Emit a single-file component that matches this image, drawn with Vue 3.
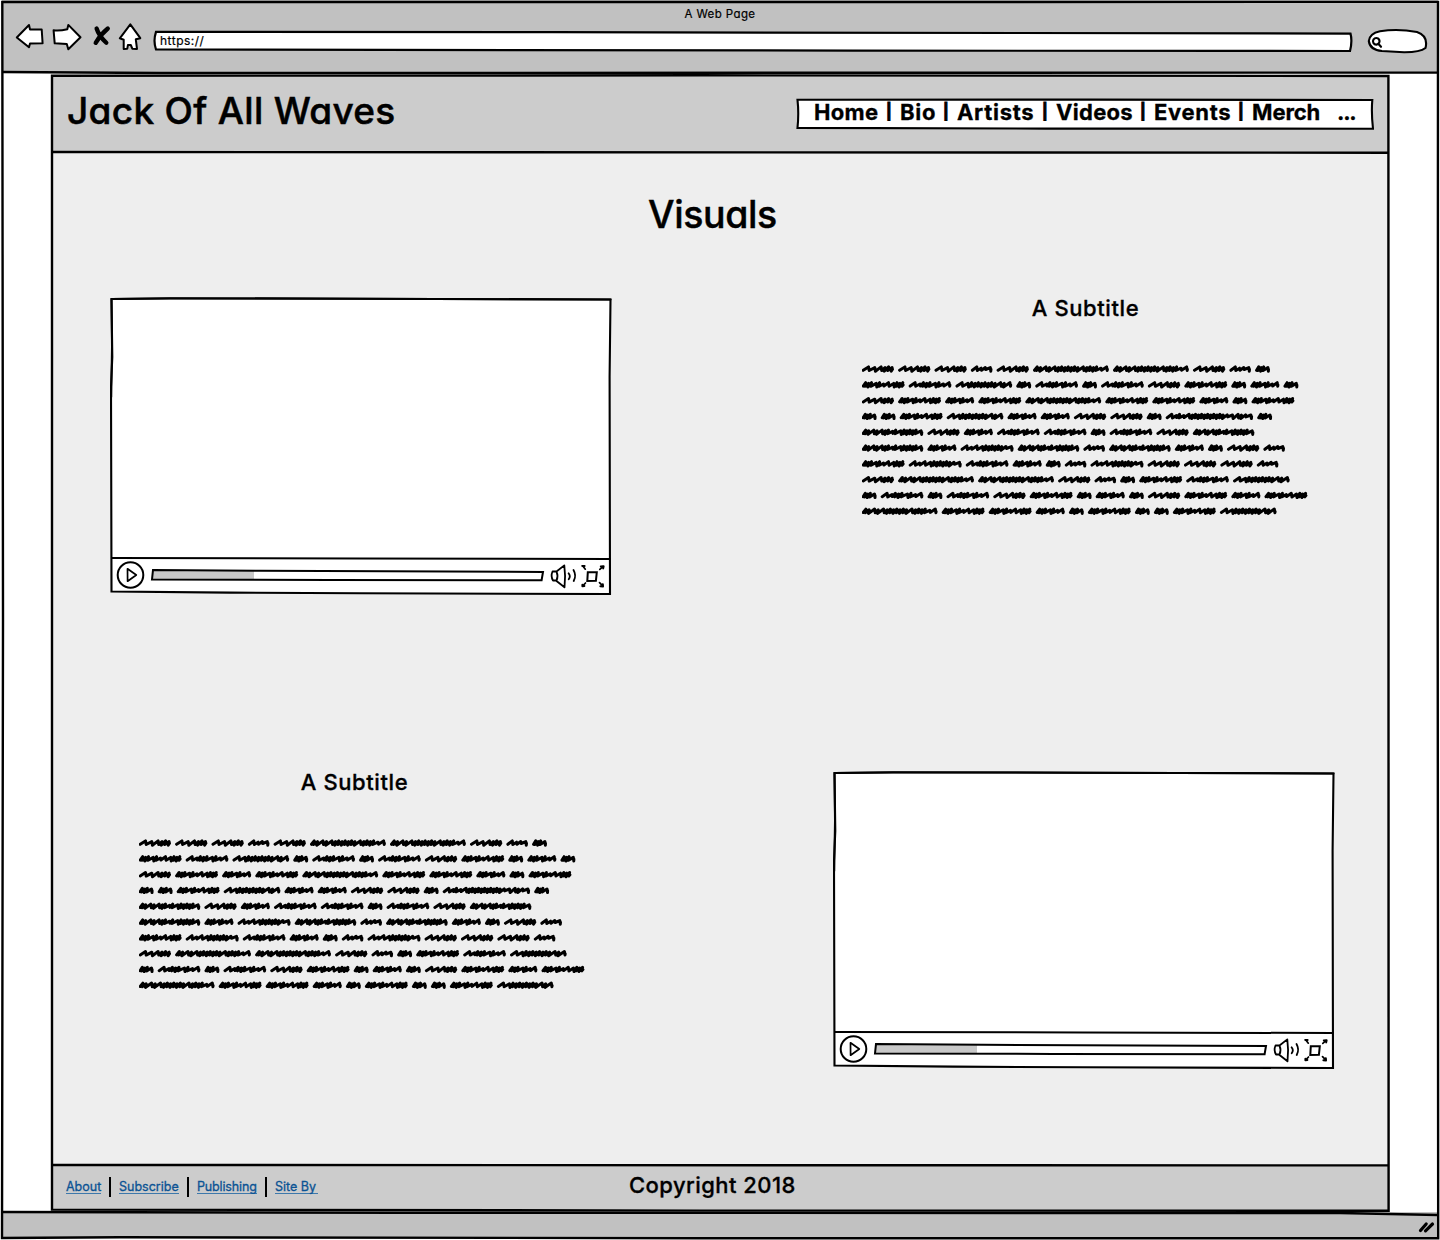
<script setup>
import { h } from 'vue'

const navItems = ['Home', 'Bio', 'Artists', 'Videos', 'Events', 'Merch']
const footerLinks = ['About', 'Subscribe', 'Publishing', 'Site By']

// Scribbled placeholder copy: each letter is one word shape.
const lines = [
  'AAACAHHACB', 'EFGBFBFAEBDB', 'AEDEHEEDBE', 'BBEGDDAABKB', 'IADFFBFAI',
  'IDJICIDBAC', 'EJFDBCJAAAC', 'AHHACBEFG', 'BFBFAEBDBAEDE', 'HEEDBEBBEG'
]

// Stroke steps of a word: s = open slanted stroke, d = tight loop, m = flat hump.
const shapes = {
  A: [36.4, 'sssddd'], B: [19, 'ddds'], C: [25.7, 'smms'], D: [33.2, 'dddsdms'],
  E: [47, 'dddsdmssddd'], F: [46.8, 'smdddsdms'], G: [60.8, 'ssddddddddsds'],
  H: [80, 'ddsdsdddddddsddddms'], I: [65.7, 'ddsdsddmdsddddds'],
  J: [57.1, 'smssddddddms'], K: [91.5, 'smdmsdddddddddddmssdms']
}
const stepWidth = { s: 5, d: 2.8, m: 4 }

function wordPath(code, x0, y) {
  const [advance, steps] = shapes[code]
  const width = advance - 7
  const total = [...steps].reduce((sum, s) => sum + stepWidth[s], 0)
  const k = width / total
  let x = x0 + 1.2
  let d = `M${x.toFixed(1)} ${y + 1.3}`
  let i = 0
  for (const s of steps) {
    const w = stepWidth[s] * k
    const sway = i++ % 2 ? 0.5 : -0.2
    const top = (s === 'm' ? y - 1.3 : y - 1.9) + sway
    const low = (s === 'm' ? y + 0.7 : y + 1.7) + sway
    d += `L${(x + w * 0.85).toFixed(1)} ${top.toFixed(1)}L${(x + w * (s === 'd' ? 0.6 : 0.95)).toFixed(1)} ${low.toFixed(1)}`
    x += w
  }
  return d + `L${(x0 + advance - 5.9).toFixed(1)} ${(y + 0.2).toFixed(1)}`
}

const scribble = lines.map((line, row) => {
  let x = 0
  return [...line].map((code) => {
    const d = wordPath(code, x, 5 + row * 15.8)
    x += shapes[code][0]
    return d
  }).join('')
}).join('')

const Scribble = () => h('svg', { width: 450, height: 154, viewBox: '0 0 450 154', style: 'display:block' }, [
  h('path', { d: scribble, fill: 'none', stroke: '#000', 'stroke-width': 3, 'stroke-linecap': 'round', 'stroke-linejoin': 'round' })
])

const Player = () => h('svg', {
  width: 502, height: 298, viewBox: '0 0 502 298', style: 'display:block',
  fill: 'none', stroke: '#000', 'stroke-width': 2, 'stroke-linejoin': 'round', 'stroke-linecap': 'round'
}, [
  h('path', { d: 'M1.5 2L60 1.2L250 1.7L500.5 2.5L499.6 80L500 297L250 296.3L120 295.6L1.5 294.5L1 90L2.3 60Z', fill: '#fff', 'stroke-width': 2.1, 'stroke-linejoin': 'miter' }),
  h('path', { d: 'M1.5 2L60 1.4L250 1.7L500.5 2.5M1.5 2L2 50L1.2 100' }),
  h('path', { d: 'M2 261L250 261.5L500 262' }),
  h('circle', { cx: 20.5, cy: 278, r: 12.8 }),
  h('path', { d: 'M17.5 271.8L26.3 278L17.6 284.2Z', 'stroke-width': 1.7 }),
  h('path', { d: 'M43 273.4L144 273.7L144 282.5L42 282.3Z', fill: '#c8c8c8', stroke: 'none' }),
  h('path', { d: 'M43 273L150 273.8L433 275L431.6 283.2L220 282.9L42 282.5Z', 'stroke-linejoin': 'miter' }),
  h('path', { d: 'M442.5 274.5Q440.5 279 443 283.5L446.5 283.5Q448.5 279 446.5 274.5ZM446.5 274.5L454.3 268.4Q455.8 279 454.5 290.3L446.5 284', 'stroke-width': 1.8 }),
  h('path', { d: 'M458.6 276.3Q461 279 458.7 282.2M463.5 273Q466.7 278.5 463.7 284', 'stroke-width': 1.8 }),
  h('path', { d: 'M477.8 275.3L486.8 275.2L485.9 283.8L477.3 284Z', 'stroke-linejoin': 'miter' }),
  h('path', { d: 'M473 269.2L475.3 272.2M489.8 272.4L493 269.7M475.5 286L473 288.7M489.5 285.6L492.5 288.6', 'stroke-width': 1.7 }),
  h('path', { d: 'M472.2 268.9L474.6 269M490.8 269.5L493.6 269.2L493.2 271.4M472.4 287.8L472.4 289.3L474.4 289M492.8 287.2L493 289.5L490.4 289.3', 'stroke-width': 2 })
])
</script>

<template>
  <div class="window">
    <header class="chrome">
      <div class="window-title">A Web Page</div>
      <div class="controls">
        <svg class="buttons" width="130" height="32" viewBox="14 21 130 32">
          <g fill="#fff" stroke="#000" stroke-width="2" stroke-linejoin="round" stroke-linecap="round">
            <path d="M16.8 37.5L29 25L30 29.5L41.7 29.5L42.6 43.3L30 43.5L29 47.3Z" />
            <path d="M53.6 30.3Q60 31 67.3 29.2L68.3 24.9L80.5 37.3L68.3 49.2L66.8 44L54.7 43.3Z" />
            <path d="M130.3 24.4L140.3 38.2L135.8 39.3L137 48.9L132.3 48.7L130.8 45L127.9 45.1L127.3 48.7L123.7 49L123.7 39.7L119.8 38.3Z" />
          </g>
          <path d="M96.6 28.5Q99 36 106.3 42.8M107.8 28.5Q100.5 34.5 95.7 42.8" fill="none" stroke="#000" stroke-width="4.3" stroke-linecap="round" />
        </svg>
        <div class="address">
          <svg class="under" width="1200" height="22" viewBox="0 0 1200 22"><path d="M3 1.8L400 2.2L1197.5 3.6Q1199.5 11 1197 21L700 20.6L3 19.5Q0 11 3 1.8Z" fill="#fff" stroke="#000" stroke-width="2.2" /></svg>
          <span>https://</span>
        </div>
        <svg class="search" width="62" height="28" viewBox="1366 27 62 28">
          <path d="M1368.8 41Q1369.5 33.5 1380 31.2Q1398 28.4 1417 32Q1428.5 36 1425.5 48Q1420 52.3 1404 52.2L1382 51Q1370 50 1368.8 41Z" fill="#fff" stroke="#000" stroke-width="2.1" />
          <path d="M1373.5 39.5A3.3 3.3 0 1 1 1376.5 44.6A3.3 3.3 0 0 1 1373.5 39.5M1378.5 44L1381 46.8" fill="none" stroke="#000" stroke-width="2.2" stroke-linecap="round" />
        </svg>
      </div>
    </header>

    <div class="page">
      <div class="masthead">
        <h1>Jack Of All Waves</h1>
        <nav>
          <svg class="under" width="578" height="32" viewBox="0 0 578 32"><path d="M1.5 1.8L290 1.6L576.3 2Q575.2 15 577 30.7L250 30.6L1.5 29.9Q3 15 1.5 1.8Z" fill="#fff" stroke="#000" stroke-width="2.1" /></svg>
          <template v-for="(item, i) in navItems" :key="item">
            <span v-if="i" class="bar">|</span><a :class="'n' + i">{{ item }}</a>
          </template>
          <span class="more">...</span>
        </nav>
      </div>

      <main>
        <h2>Visuals</h2>
        <section class="feature first">
          <Player />
          <article><h3>A Subtitle</h3><Scribble /></article>
        </section>
        <section class="feature second">
          <article><h3>A Subtitle</h3><Scribble /></article>
          <Player />
        </section>
      </main>

      <footer>
        <div class="links">
          <a v-for="(link, i) in footerLinks" :key="link" :class="'l' + i"><span>{{ link }}</span></a>
        </div>
        <p>Copyright 2018</p>
      </footer>
    </div>

    <div class="status">
      <svg width="18" height="16" viewBox="0 0 18 16"><path d="M2.5 12.5L8.2 6M7.5 12.8L14.5 6" stroke="#000" stroke-width="3.2" stroke-linecap="round" /></svg>
    </div>

    <svg class="outline" width="1440" height="1240" viewBox="0 0 1440 1240" fill="none" stroke="#000" stroke-width="2.4">
      <path d="M2.3 2L1438 1.9L1437.7 620L1438.2 1238.3L700 1238.2L120 1237.2L2 1238L3 620Z" />
      <path d="M3 72L160 73L1438 72.6" />
      <path d="M3 1212L400 1212.8L1340 1213L1438 1215" />
      <path d="M52 75.8L700 75.3L1388.4 76L1388.6 1210.7L700 1210.6L52 1209.6Z" />
      <path d="M52 152L1388 152.7M52 1165L1388 1165.4" />
    </svg>
  </div>
</template>

<style>
body { margin: 0; }
</style>

<style scoped>
.window {
  position: relative;
  display: flex;
  flex-direction: column;
  width: 1440px;
  height: 1240px;
  background: #fff;
  color: #000;
  font-family: Inter, "Liberation Sans", sans-serif;
  font-feature-settings: "cv11";
  overflow: hidden;
}
h1, h2, h3, p { margin: 0; font-weight: 500; white-space: nowrap; }
.outline { position: absolute; inset: 0; pointer-events: none; }
.under { position: absolute; left: 0; top: 0; z-index: -1; }
.chrome { height: 73px; background: #c1c1c1; margin: 0 2px; }
.window-title { text-align: center; font-size: 11.5px; line-height: 17px; padding-top: 6px; height: 0; letter-spacing: 0.4px; -webkit-text-stroke: 0.2px #000; }
.controls { display: flex; padding: 15px 0 0 12px; }
.address { position: relative; z-index: 0; width: 1200px; height: 22px; margin: 9px 0 0 9px; }
.address span { display: block; padding-left: 7px; font-size: 12px; line-height: 21px; letter-spacing: 0.5px; -webkit-text-stroke: 0.2px #000; }
.search { margin: 6px 0 0 13px; }
.page { display: flex; flex-direction: column; width: 1336px; height: 1137px; margin: 2px 0 0 52px; background: #eee; }
.masthead { display: flex; justify-content: space-between; height: 77px; background: #ccc; }
h1 { padding: 11px 0 0 15px; font-size: 37px; line-height: 50px; letter-spacing: 0.3px; -webkit-text-stroke: 0.5px #000; }
nav { position: relative; z-index: 0; display: flex; width: 560px; height: 32px; margin: 23px 14px 0 0; padding-left: 18px; font-size: 22px; font-weight: 700; line-height: 28px; letter-spacing: 0.3px; white-space: nowrap; -webkit-text-stroke: 0.3px #000; }
nav a { flex: none; }
.bar { flex: none; width: 22px; text-align: center; font-size: 15.5px; line-height: 27px; -webkit-text-stroke: 1px #000; }
.n0 { width: 64px; }
nav .n1 { width: 35px; letter-spacing: 0.7px; }
nav .n2 { width: 77px; letter-spacing: 0.7px; }
.n3 { width: 76px; }
nav .n4 { width: 76px; letter-spacing: 0.7px; }
nav .n5 { width: 67px; letter-spacing: -0.1px; }
.more { margin-left: 18px; letter-spacing: -1.2px; }
main { display: flex; flex-direction: column; height: 1013px; }
h2 { flex: none; padding-top: 37.5px; text-align: center; font-size: 37.5px; line-height: 50px; height: 57.5px; width: 1321px; letter-spacing: -0.4px; -webkit-text-stroke: 0.4px #000; }
.feature { display: flex; justify-content: space-between; flex: none; }
.first { height: 474px; margin: 50px 71px 0 58px; }
.second { margin: 0 53px 0 87px; }
article { width: 450px; }
.first article { width: 455px; }
h3 { height: 67px; font-size: 22px; line-height: 23px; text-align: center; letter-spacing: 0.6px; -webkit-text-stroke: 0.3px #000; }
.first h3 { width: 447px; }
.second h3 { width: 431px; }
footer { position: relative; display: flex; height: 45px; background: #ccc; }
.links { display: flex; padding: 12px 0 0 14px; font-size: 12.5px; line-height: 20px; color: #0b5394; -webkit-text-stroke: 0.3px #0b5394; }
.links a { height: 20px; white-space: nowrap; }
.links a + a { border-left: 2px solid #000; padding-left: 8px; }
.links span { display: block; height: 16px; line-height: 19px; border-bottom: 1px solid #3d78ab; }
.l0 { width: 43px; }
.l1 { width: 68px; }
.l2 { width: 68px; }
.l0 span { width: 35px; }
.l1 span { width: 60px; }
.l2 span { width: 60px; letter-spacing: -0.15px; }
.l3 span { width: 43px; }
footer p { position: absolute; left: 577px; top: 7px; font-size: 22px; line-height: 27px; letter-spacing: 0.45px; -webkit-text-stroke: 0.3px #000; }
.status { display: flex; justify-content: flex-end; height: 26px; margin: 0 2px; padding: 6px 2px 0 0; box-sizing: border-box; background: #c1c1c1; }
</style>
